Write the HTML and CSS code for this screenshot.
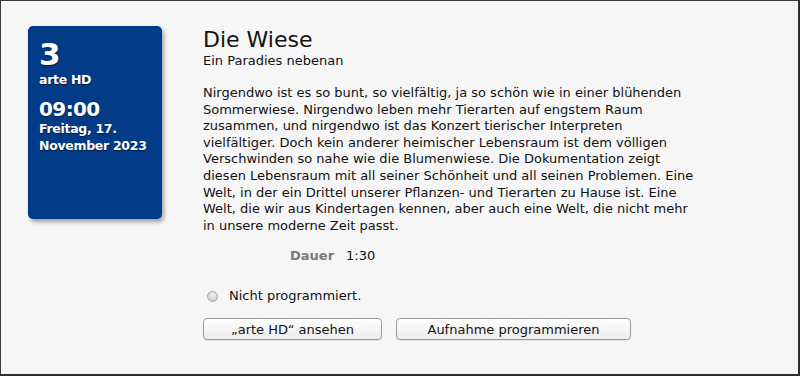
FILE: index.html
```html
<!DOCTYPE html>
<html lang="de">
<head>
    <meta charset="UTF-8">
    <meta name="viewport" content="width=device-width, initial-scale=1.0">
    <title>Die Wiese</title>
    <link rel="stylesheet" href="styles.css">
</head>
<body>
    <div class="window">
        <!-- Sender / Zeit -->
        <div class="channel-card">
            <div class="channel-number">3</div>
            <div class="channel-name">arte HD</div>
            <div class="start-time">09:00</div>
            <div class="start-date">Freitag, 17.<br>November 2023</div>
        </div>

        <div class="details">
            <h1 class="title">Die Wiese</h1>
            <h2 class="subtitle">Ein Paradies nebenan</h2>
            <p class="description">
                Nirgendwo ist es so bunt, so vielfältig, ja so schön wie in einer blühenden<br>
                Sommerwiese. Nirgendwo leben mehr Tierarten auf engstem Raum<br>
                zusammen, und nirgendwo ist das Konzert tierischer Interpreten<br>
                vielfältiger. Doch kein anderer heimischer Lebensraum ist dem völligen<br>
                Verschwinden so nahe wie die Blumenwiese. Die Dokumentation zeigt<br>
                diesen Lebensraum mit all seiner Schönheit und all seinen Problemen. Eine<br>
                Welt, in der ein Drittel unserer Pflanzen- und Tierarten zu Hause ist. Eine<br>
                Welt, die wir aus Kindertagen kennen, aber auch eine Welt, die nicht mehr<br>
                in unsere moderne Zeit passt.
            </p>
            <div class="duration">
                <span class="duration-label">Dauer</span>
                <span class="duration-value">1:30</span>
            </div>
            <div class="status">
                <span class="status-dot"></span>
                <span>Nicht programmiert.</span>
            </div>
            <div class="actions">
                <button class="btn btn-watch">„arte HD“ ansehen</button>
                <button class="btn btn-record">Aufnahme programmieren</button>
            </div>
        </div>
    </div>
</body>
</html>
```

FILE: styles.css
```css
* {
    margin: 0;
    padding: 0;
    box-sizing: border-box;
}
body {
    font-family: "DejaVu Sans", "Noto Sans", sans-serif;
    font-size: 13px;
    color: #111;
    background: #f6f6f6;
}
.window {
    width: 800px;
    height: 376px;
    background: #f6f6f6;
    border-top: 1px solid #3a3a3a;
    border-left: 1px solid #3a3a3a;
    border-right: 2px solid #2e2e2e;
    border-bottom: 2px solid #2e2e2e;
    display: flex;
    align-items: flex-start;
    padding: 25px 0 0 27px;
    gap: 41px;
}

/* blue card on the left */
.channel-card {
    width: 134px;
    height: 193px;
    flex-shrink: 0;
    background: #023b87;
    border-radius: 5px;
    box-shadow: 2px 3px 4px rgba(0, 0, 0, 0.35);
    color: white;
    font-weight: bold;
    padding: 10px 0 0 11px;
    text-shadow: 0 1px 1px rgba(0, 0, 0, 0.6);
}
.channel-number {
    font-size: 31px;
    line-height: 36px;
}
.channel-name {
    font-size: 12.5px;
    line-height: 16px;
    letter-spacing: -0.3px;
}
.start-time {
    font-size: 20px;
    line-height: 24px;
    margin-top: 9px;
    letter-spacing: -0.6px;
}
.start-date {
    font-size: 12.5px;
    line-height: 16.5px;
    letter-spacing: -0.3px;
}

/* text column */
.details {
    padding-top: 1px;
}
.title {
    font-size: 22px;
    font-weight: normal;
    line-height: 26px;
    color: #111;
}
.subtitle {
    font-size: 13px;
    font-weight: normal;
    line-height: 16px;
}
.description {
    margin-top: 16px;
    font-size: 13px;
    line-height: 16.6px;
    white-space: nowrap;
}
.duration {
    margin-top: 14px;
    padding-left: 87px;
    display: flex;
    gap: 12px;
    line-height: 16px;
}
.duration-label {
    color: #7a7a7a;
    font-weight: bold;
}
.status {
    margin-top: 24px;
    display: flex;
    align-items: center;
    gap: 11px;
    padding-left: 4px;
    line-height: 16px;
}
.status-dot {
    width: 11px;
    height: 11px;
    border-radius: 50%;
    background: radial-gradient(circle at 50% 35%, #f4f4f4, #bdbdbd);
    border: 1px solid #a8a8a8;
}
.actions {
    margin-top: 14px;
    display: flex;
    gap: 14px;
}
.btn {
    height: 22px;
    font-family: inherit;
    font-size: 13px;
    color: #111;
    border: 1px solid #9a9a9a;
    border-radius: 4px;
    background: linear-gradient(to bottom, #ffffff, #ececec);
    box-shadow: 0 1px 0 rgba(0, 0, 0, 0.08);
}
.btn-watch {
    width: 179px;
}
.btn-record {
    width: 235px;
}
```
